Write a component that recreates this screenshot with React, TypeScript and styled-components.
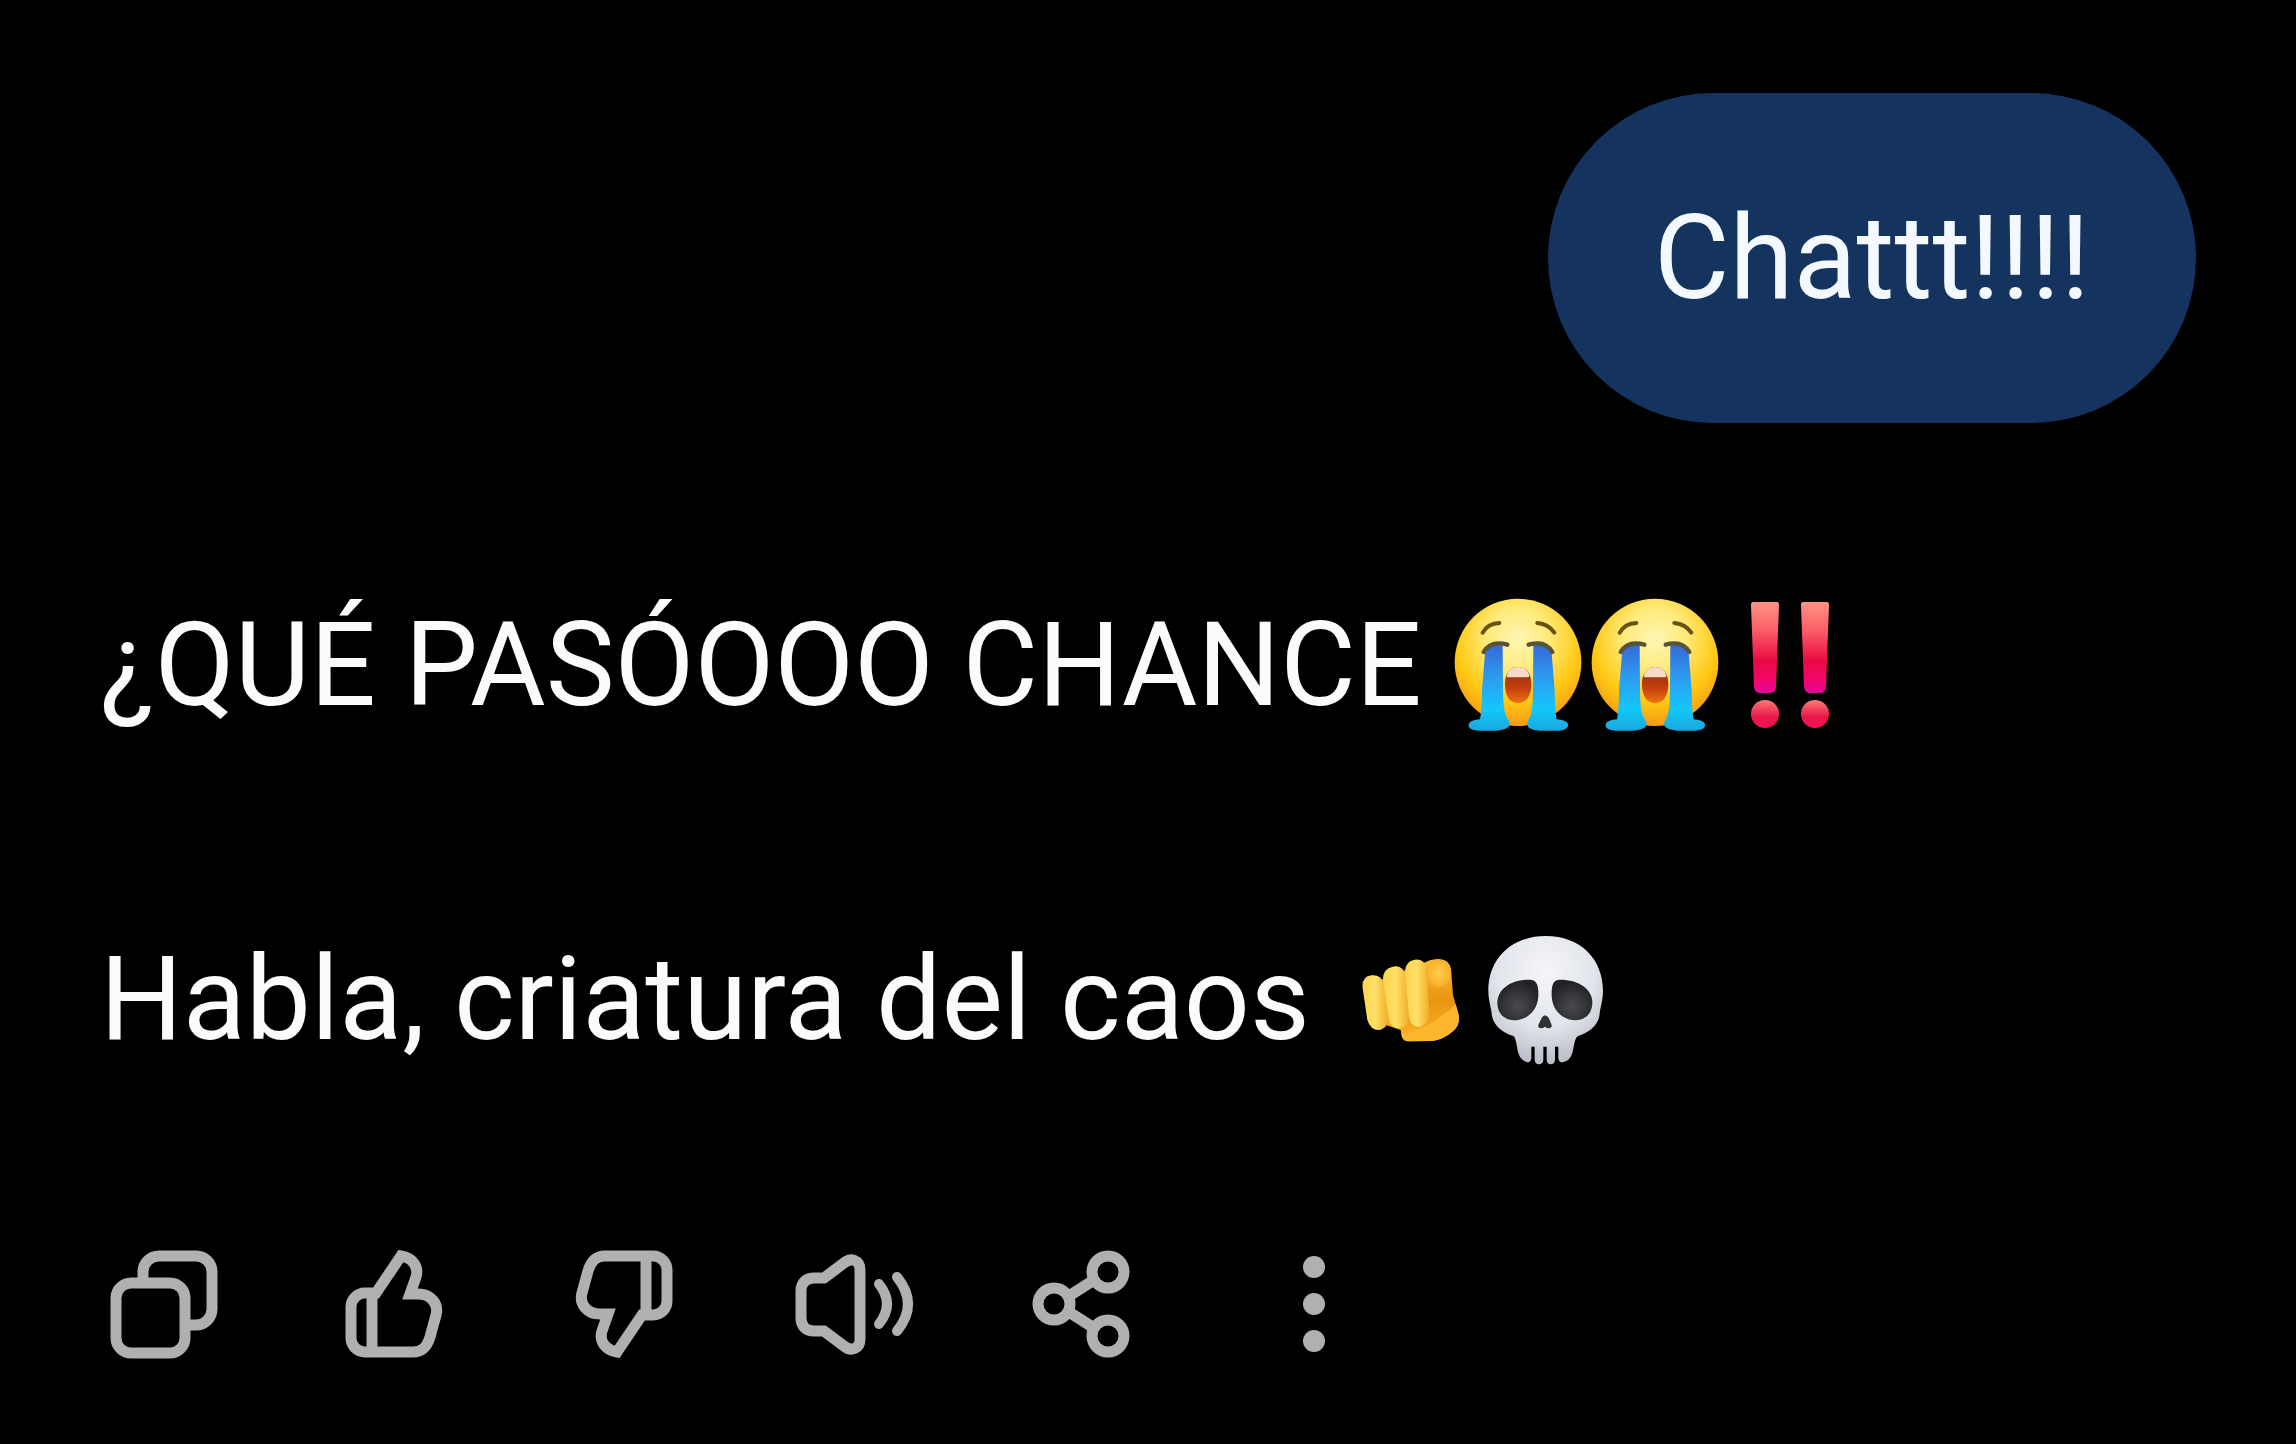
import React, { useId } from "react";
import styled, { createGlobalStyle } from "styled-components";

const GlobalStyle = createGlobalStyle`
  *, *::before, *::after { box-sizing: border-box; }
  body {
    margin: 0;
    background: #000;
    font-family: Roboto, "Liberation Sans", sans-serif;
  }
`;

const Thread = styled.main`
  display: flex;
  flex-direction: column;
  padding: 93px 100px 80px;
`;

const UserRow = styled.div`
  display: flex;
  justify-content: flex-end;
  margin-bottom: 157px;
`;

const Bubble = styled.p`
  margin: 0;
  padding: 80px 106px;
  border-radius: 165px;
  background: #14345f;
  color: #f3f9ff;
  font-size: 116px;
  line-height: 170px;
`;

const Reply = styled.article`
  display: flex;
  flex-direction: column;
  gap: 164px;
`;

const Line = styled.p`
  margin: 0;
  color: #fbfbfb;
  font-size: 116px;
  line-height: 170px;
`;

const Emoji = styled.svg`
  width: 137px;
  height: 137px;
  vertical-align: -29px;
`;

const Actions = styled.div`
  display: flex;
  gap: 110px;
  margin-top: 160px;
  padding-left: 4px;
`;

const ActionButton = styled.button`
  width: 120px;
  height: 120px;
  padding: 0;
  border: 0;
  background: none;
  color: #b0b0b0;
  cursor: pointer;
`;

const Glyph = styled.svg`
  display: block;
  width: 100%;
  height: 100%;
  fill: none;
  stroke: currentColor;
  stroke-width: 11;
`;

function CryingFace() {
  const id = useId();
  return (
    <Emoji viewBox="0 0 137 137" role="img" aria-label="😭">
      <defs>
        <radialGradient id={id + "f"} cx=".5" cy=".32" r=".68">
          <stop offset="0" stopColor="#fff6b4" />
          <stop offset=".35" stopColor="#ffeb7c" />
          <stop offset=".72" stopColor="#ffc914" />
          <stop offset="1" stopColor="#f59a14" />
        </radialGradient>
        <linearGradient id={id + "t"} x1="0" y1="0" x2="0" y2="1">
          <stop offset="0" stopColor="#3468d8" />
          <stop offset=".4" stopColor="#2c9df0" />
          <stop offset=".75" stopColor="#12c8fb" />
          <stop offset="1" stopColor="#1aa9dc" />
        </linearGradient>
        <linearGradient id={id + "m"} x1="0" y1="0" x2="0" y2="1">
          <stop offset="0" stopColor="#8e2a12" />
          <stop offset=".6" stopColor="#c6400c" />
          <stop offset="1" stopColor="#ee7410" />
        </linearGradient>
      </defs>
      <g transform="scale(.33333) translate(-54 -51)">
        <ellipse cx="258" cy="247" rx="190" ry="191" fill={`url(#${id}f)`} />
        <path
          d="M152 158Q168 130 202 129M316 129Q350 132 367 158"
          fill="none"
          stroke="#6b5212"
          strokeWidth="12"
          strokeLinecap="round"
        />
        <path
          d="M160 208C180 190 200 192 212 196L213 330Q213 400 228 418Q246 448 195 452H140Q106 450 110 432Q116 420 144 418Q150 390 150 330Z"
          fill={`url(#${id}t)`}
        />
        <path
          d="M358 208C340 190 318 192 304 196L303 330Q303 400 290 418Q272 448 323 452H378Q412 450 408 432Q402 420 374 418Q368 390 368 330Z"
          fill={`url(#${id}t)`}
        />
        <path
          d="M155 216Q176 180 226 194M290 194Q340 180 361 216"
          fill="none"
          stroke="#5a5232"
          strokeWidth="13"
          strokeLinecap="round"
        />
        <path
          d="M258 261C286 261 299 285 298 315C297 350 282 369 258 369C234 369 220 350 219 315C218 285 232 261 258 261Z"
          fill={`url(#${id}m)`}
        />
        <path
          d="M258 261C276 261 287 270 292 286Q294 292 284 292H232Q222 292 225 286C230 270 241 261 258 261Z"
          fill="#f6dcc8"
        />
      </g>
    </Emoji>
  );
}

function DoubleBang() {
  const id = useId();
  return (
    <Emoji viewBox="0 0 137 137" role="img" aria-label="‼️">
      <defs>
        <linearGradient id={id + "b"} x1="0" y1="0" x2="0" y2="1">
          <stop offset="0" stopColor="#ff9384" />
          <stop offset=".3" stopColor="#fd6068" />
          <stop offset=".65" stopColor="#ea0a42" />
          <stop offset=".85" stopColor="#f2056c" />
          <stop offset="1" stopColor="#e4089a" />
        </linearGradient>
        <linearGradient id={id + "d"} x1="0" y1="0" x2="0" y2="1">
          <stop offset="0" stopColor="#fb7a78" />
          <stop offset=".6" stopColor="#ea1848" />
          <stop offset="1" stopColor="#f2105a" />
        </linearGradient>
      </defs>
      {[41, 91].map((x) => (
        <g key={x} transform={`translate(${x} 0)`}>
          <path
            d="M-12 5H12Q14 5 14 8L11 90Q10 96 5 96H-5Q-10 96-11 90L-14 8Q-14 5-12 5Z"
            fill={`url(#${id}b)`}
          />
          <circle cx="0" cy="117" r="14" fill={`url(#${id}d)`} />
        </g>
      ))}
    </Emoji>
  );
}

function PointingHand() {
  const id = useId();
  return (
    <Emoji viewBox="0 0 137 137" role="img" aria-label="🫵">
      <defs>
        <linearGradient id={id + "p"} x1="0" y1="0" x2="0" y2="1">
          <stop offset="0" stopColor="#fbbd35" />
          <stop offset=".5" stopColor="#e89512" />
          <stop offset="1" stopColor="#ffb42a" />
        </linearGradient>
        <linearGradient id={id + "k"} x1="0" y1="0" x2="1" y2="0">
          <stop offset="0" stopColor="#ffd44c" />
          <stop offset=".5" stopColor="#ffe068" />
          <stop offset="1" stopColor="#f3ab27" />
        </linearGradient>
        <radialGradient id={id + "i"}>
          <stop offset="0" stopColor="#ffcf4c" />
          <stop offset="1" stopColor="#f7b02b" />
        </radialGradient>
      </defs>
      <g transform="scale(.33333) translate(15 -33)">
        <path
          d="M110 180L240 128Q270 112 300 120Q322 128 322 160L327 225L344 285Q350 315 325 335Q300 357 265 363L190 364Q172 360 170 330L110 310Z"
          fill={`url(#${id}p)`}
        />
        <path
          d="M82 166Q110 162 119 190L133 290Q134 322 108 330Q80 332 70 300L56 205Q52 170 82 166Z"
          fill={`url(#${id}k)`}
        />
        <path
          d="M146 140Q174 134 184 162L195 285Q194 318 168 325Q140 326 134 295L117 180Q116 146 146 140Z"
          fill={`url(#${id}k)`}
        />
        <path
          d="M212 119Q242 116 248 146L256 275Q255 312 228 320Q200 322 195 290L183 155Q184 123 212 119Z"
          fill={`url(#${id}k)`}
        />
        <ellipse cx="284" cy="160" rx="37" ry="41" fill={`url(#${id}i)`} />
        <path
          d="M172 342Q240 330 290 290Q320 268 335 252L344 285Q350 315 325 335Q300 357 265 363L190 364Q174 362 172 342Z"
          fill="#ffb52e"
        />
      </g>
    </Emoji>
  );
}

function Skull() {
  const id = useId();
  return (
    <Emoji viewBox="0 0 137 137" role="img" aria-label="💀">
      <defs>
        <radialGradient id={id + "s"} cx=".5" cy=".28" r=".72">
          <stop offset="0" stopColor="#f4f6fb" />
          <stop offset=".6" stopColor="#e2e4eb" />
          <stop offset="1" stopColor="#b9bcc4" />
        </radialGradient>
        <radialGradient id={id + "e"} cx=".5" cy=".65" r=".6">
          <stop offset="0" stopColor="#4a4b4e" />
          <stop offset="1" stopColor="#212224" />
        </radialGradient>
      </defs>
      <g transform="scale(.33333) translate(-396 -33)">
        <path
          d="M605 48C710 48 777 118 777 212C777 242 768 265 767 280C765 315 735 338 702 348C690 356 690 385 684 402Q677 423 656 427Q645 429 643 415V380H633V420Q632 433 619 433Q609 432 608 420V380H598V420Q597 433 584 433Q573 432 572 420V380H562V415Q560 429 549 427Q530 420 524 402C518 385 518 356 508 348C475 338 445 315 443 280C442 265 433 242 433 212C433 118 500 48 605 48Z"
          fill={`url(#${id}s)`}
        />
        <path
          d="M460 245C462 205 505 178 558 179C578 180 584 195 583 228C581 275 545 302 508 301C475 298 459 275 460 245Z"
          fill={`url(#${id}e)`}
        />
        <path
          d="M745 245C743 205 700 178 647 179C627 180 622 195 623 228C625 275 660 302 697 301C730 298 746 275 745 245Z"
          fill={`url(#${id}e)`}
        />
        <path
          d="M603 286Q612 288 616 298L623 315Q624 324 615 325Q608 325 603 320Q598 325 591 325Q581 324 583 315L591 298Q595 288 603 286Z"
          fill="#303134"
        />
      </g>
    </Emoji>
  );
}

const thumb = (
  <>
    <path d="M42 49L67 12C79 14 85 23 82 33L76 50H84C97 50 105 60 102 71L96 93C93 103 88 108 79 108H31A14 14 0 0 1 17 94V63A14 14 0 0 1 31 49Z" />
    <path d="M38 50V108" />
  </>
);

const actions = [
  {
    label: "Copiar",
    icon: (
      <>
        <rect x="12" y="39" width="69" height="70" rx="15" />
        <path d="M39 38V28A16 16 0 0 1 55 12H92A16 16 0 0 1 108 28V65A16 16 0 0 1 92 81H82" />
      </>
    ),
  },
  { label: "Buena respuesta", icon: thumb },
  { label: "Mala respuesta", icon: <g transform="rotate(180 60 60)">{thumb}</g> },
  {
    label: "Leer en voz alta",
    icon: (
      <>
        <path d="M20 34H30L50 19C57 13 66 16 66 26V95C66 105 57 108 50 102L30 87H20C12 87 7 82 7 74V47C7 39 12 34 20 34Z" />
        <path d="M85 40Q101 60 85 80M103 33Q125 60 103 87" strokeWidth="10" strokeLinecap="round" />
      </>
    ),
  },
  {
    label: "Compartir",
    icon: (
      <>
        <circle cx="30" cy="60" r="16" />
        <circle cx="84" cy="28" r="16" />
        <circle cx="84" cy="92" r="16" />
        <path d="M45 52L70 36M45 68L70 84" />
      </>
    ),
  },
  {
    label: "Más opciones",
    icon: (
      <g fill="currentColor" stroke="none">
        <circle cx="60" cy="23" r="11" />
        <circle cx="60" cy="60" r="11" />
        <circle cx="60" cy="97" r="11" />
      </g>
    ),
  },
];

export default function App() {
  return (
    <>
      <GlobalStyle />
      <Thread>
        <UserRow>
          <Bubble>Chattt!!!!</Bubble>
        </UserRow>
        <Reply>
          <Line>
            ¿QUÉ PASÓOOO CHANCE <CryingFace /><CryingFace /><DoubleBang />
          </Line>
          <Line>
            Habla, criatura del caos <PointingHand /><Skull />
          </Line>
        </Reply>
        <Actions>
          {actions.map(({ label, icon }) => (
            <ActionButton key={label} type="button" aria-label={label}>
              <Glyph viewBox="0 0 120 120" aria-hidden="true">
                {icon}
              </Glyph>
            </ActionButton>
          ))}
        </Actions>
      </Thread>
    </>
  );
}
